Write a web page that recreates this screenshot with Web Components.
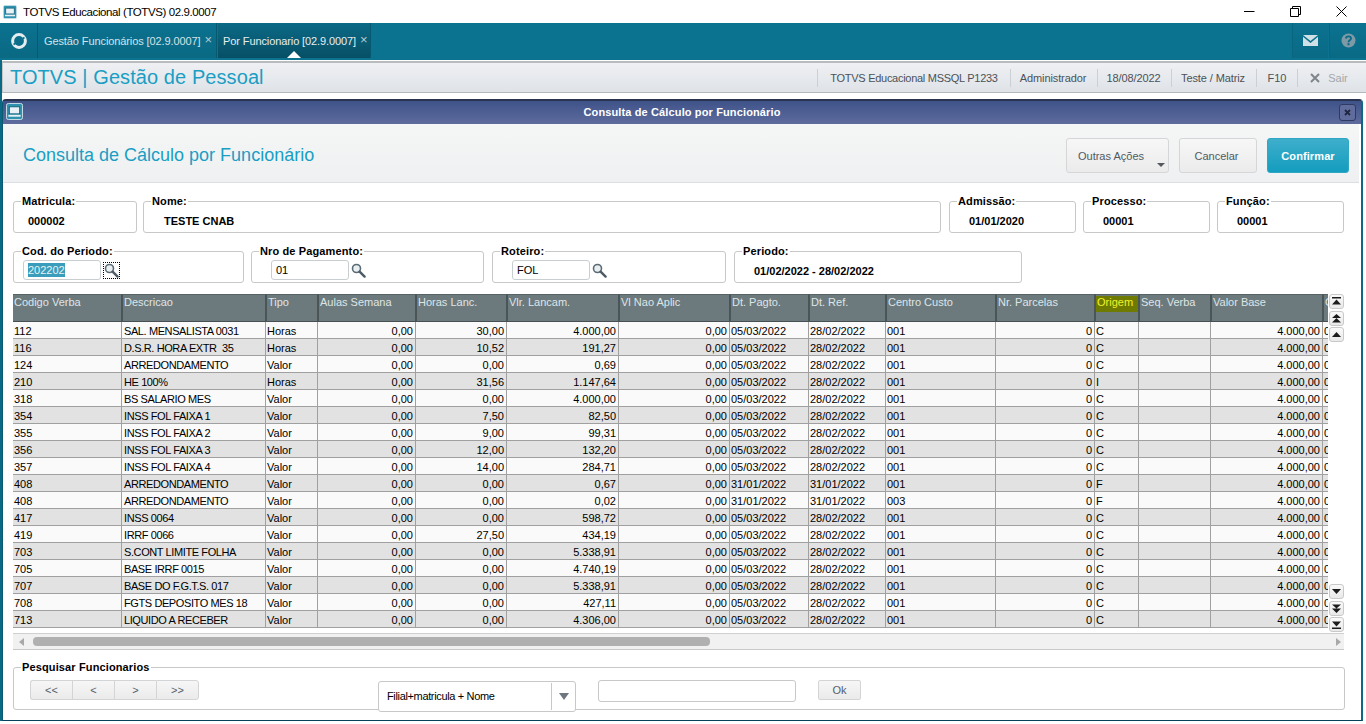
<!DOCTYPE html>
<html lang="pt-BR">
<head>
<meta charset="utf-8">
<title>TOTVS Educacional</title>
<style>
  html, body { margin: 0; padding: 0; background: #fff; }
  body { width: 1366px; height: 724px; overflow: hidden; font-family: "Liberation Sans", Arial, sans-serif; font-size: 11px; color: #000; }
</style>
</head>
<body>
<app-shell>
  <window-bar title-text="TOTVS Educacional (TOTVS) 02.9.0007"></window-bar>
  <tab-strip></tab-strip>
  <module-header></module-header>
  <dialog-window dialog-title="Consulta de Cálculo por Funcionário">
    <dialog-head heading="Consulta de Cálculo por Funcionário"></dialog-head>
    <field-row style="padding-top:18px">
      <group-box label="Matricula:" style="width:124px"><field-value indent="14">000002</field-value></group-box>
      <group-box label="Nome:" style="width:798px;margin-left:6px"><field-value indent="20">TESTE CNAB</field-value></group-box>
      <group-box label="Admissão:" style="width:127px;margin-left:8px"><field-value indent="19">01/01/2020</field-value></group-box>
      <group-box label="Processo:" style="width:127px;margin-left:7px"><field-value indent="19">00001</field-value></group-box>
      <group-box label="Função:" style="width:127px;margin-left:7px"><field-value indent="19">00001</field-value></group-box>
    </field-row>
    <field-row style="padding-top:18px">
      <group-box label="Cod. do Periodo:" style="width:231px"><lookup-input indent="9" selected focused>202202</lookup-input></group-box>
      <group-box label="Nro de Pagamento:" style="width:233px;margin-left:7px"><lookup-input indent="19">01</lookup-input></group-box>
      <group-box label="Roteiro:" style="width:234px;margin-left:8px"><lookup-input indent="19">FOL</lookup-input></group-box>
      <group-box label="Periodo:" style="width:288px;margin-left:8px"><field-value indent="19">01/02/2022 - 28/02/2022</field-value></group-box>
    </field-row>
    <data-grid></data-grid>
    <search-panel></search-panel>
  </dialog-window>
</app-shell>

<script>
const FONT = '"Liberation Sans", Arial, sans-serif';

const MONITOR_ICON = (size) => `
  <svg width="${size}" height="${size}" viewBox="0 0 18 18" aria-hidden="true">
    <rect x=".5" y=".5" width="17" height="17" rx="2" fill="#2f93b0" stroke="#cfe3ea"/>
    <rect x="3.5" y="4" width="11" height="7.5" fill="#e8f2f6" stroke="#12607a"/>
    <path d="M2.5 13.5h13" stroke="#e8f2f6" stroke-width="2"/>
  </svg>`;

const LENS_ICON = `
  <svg width="15" height="15" viewBox="0 0 15 15" aria-hidden="true">
    <circle cx="5.5" cy="5.5" r="4" fill="#e9eef1" stroke="#5b6b75" stroke-width="1.6"/>
    <path d="M8.6 8.6l5 5" stroke="#4d5c66" stroke-width="2.4" stroke-linecap="round"/>
  </svg>`;

// a small base class, every element only has to give its html
class ShadowElement extends HTMLElement {
  constructor() {
    super();
    this.attachShadow({mode: 'open'});
  }
  connectedCallback() {
    this.shadowRoot.innerHTML = this.render();
  }
}

class AppShell extends ShadowElement {
  render() {
    return `<style>:host { display: flex; flex-direction: column; width: 1366px; height: 724px;
      background: linear-gradient(#0a6a86, #0a6a86) 0 23px / 2px 698px no-repeat; }</style><slot></slot>`;
  }
}

class WindowBar extends ShadowElement {
  render() {
    return `
      <style>
        :host { display: flex; align-items: center; height: 23px; background: #fff; flex: none; padding-right: 2px; box-sizing: border-box; }
        .icon { margin: 0 6px 0 3px; display: flex; }
        .title { font: 11.5px ${FONT}; color: #000; flex: 1; letter-spacing: -.4px; }
        .ctl { width: 46px; display: flex; justify-content: center; }
      </style>
      <span class="icon">${MONITOR_ICON(14)}</span>
      <span class="title">${this.getAttribute('title-text')}</span>
      <span class="ctl"><svg width="11" height="11"><path d="M0 5.5h10.5" stroke="#000"/></svg></span>
      <span class="ctl"><svg width="11" height="11" fill="none" stroke="#000"><path d="M.5 2.5h8v8h-8zM2.5 2.5v-2h8v8h-2"/></svg></span>
      <span class="ctl"><svg width="11" height="11" stroke="#000" fill="none"><path d="M.5.5l10 10M10.5.5l-10 10"/></svg></span>`;
  }
}

class TabStrip extends ShadowElement {
  render() {
    return `
      <style>
        :host { display: flex; height: 37px; background: #0b7290; flex: none; font: 11px ${FONT}; color: #d4e3e8; box-sizing: border-box; padding-bottom: 2px; }
        .cell { display: flex; align-items: center; justify-content: center; height: 100%; background: linear-gradient(#0b7290, #0a6983); border-right: 1px solid #07596f; box-sizing: border-box; }
        .home { width: 38px; }
        .tab { padding-left: 6px; width: 179px; justify-content: flex-start; white-space: nowrap; position: relative; letter-spacing: -.1px; }
        .tab .x { margin-left: 4px; color: #b5ccd4; font-size: 13px; position: relative; top: -1px; }
        .tab.active { width: 153px; margin-left: 1px; padding-left: 5px; background: linear-gradient(#0b6a86, #074f65); color: #e6eef1; }
        .tab.active::after { content: ""; position: absolute; left: 69px; bottom: 0; border: 7px solid transparent; border-top: 0; border-bottom-color: #fff; }
        .space { flex: 1; }
        .side { width: 36px; border-left: 1px solid #0a6580; background: linear-gradient(#0b7290, #0a6a85); margin-left: 1px; border-right: 0; }
      </style>
      <div class="cell home">
        <svg width="18" height="18" viewBox="0 0 18 18" aria-hidden="true">
          <circle cx="9" cy="9" r="6.4" fill="none" stroke="#e4eef1" stroke-width="3"/>
          <path d="M3.5 12.5L14.5 5.5" stroke="#0b6f8c" stroke-width="1.5"/>
        </svg>
      </div>
      <div class="cell tab">Gestão Funcionários [02.9.0007]<span class="x">×</span></div>
      <div class="cell tab active">Por Funcionario [02.9.0007]<span class="x">×</span></div>
      <div class="space"></div>
      <div class="cell side">
        <svg width="15" height="11" viewBox="0 0 15 11" aria-hidden="true">
          <path d="M0 0h15L7.5 6z" fill="#cfe0e6"/><path d="M0 1.8V11h15V1.8L7.5 8z" fill="#cfe0e6"/>
        </svg>
      </div>
      <div class="cell side" style="margin-right:0;width:37px">
        <svg width="15" height="15" viewBox="0 0 15 15" aria-hidden="true">
          <circle cx="7.5" cy="7.5" r="7" fill="#7d9aa6"/>
          <path d="M5 5.6C5 2.6 10 2.7 10 5.5 10 7.4 7.5 7.2 7.5 9.2" fill="none" stroke="#0b6a85" stroke-width="1.9"/>
          <rect x="6.5" y="10.2" width="2" height="2" fill="#0b6a85"/>
        </svg>
      </div>`;
  }
}

class ModuleHeader extends ShadowElement {
  render() {
    const items = [
      ['TOTVS Educacional MSSQL P1233', 193, -.28, 0],
      ['Administrador', 87, -.1, 2],
      ['18/08/2022', 74, -.1, 2],
      ['Teste / Matriz', 85, -.1, 2],
      ['F10', 41, 0, 0]
    ];
    return `
      <style>
        :host { display: flex; align-items: center; flex: none; height: 32px; margin: 1px 0 6px 2px; box-sizing: border-box;
          border-top: 2px solid #b9bcbf; border-bottom: 1px solid #b5b8bb; border-left: 1px solid #c4c6c8; background: linear-gradient(#eef0f3, #dfe3e8); }
        h1 { margin: 0 0 0 7px; font: 400 20px ${FONT}; color: #1a9ec3; flex: 1; letter-spacing: .08px; }
        .item { box-sizing: border-box; border-left: 1px solid #ccd0d4; height: 18px; display: flex; align-items: center; justify-content: center; font: 11px ${FONT}; color: #4c5257; }
        .exit { width: 69px; gap: 8px; color: #a3a7ab; padding-right: 6px; }
      </style>
      <h1>TOTVS | Gestão de Pessoal</h1>
      ${items.map(([text, w, ls, pr]) => `<div class="item" style="width:${w}px;letter-spacing:${ls}px;padding-right:${pr}px">${text}</div>`).join('')}
      <div class="item exit">
        <svg width="10" height="10" aria-hidden="true"><path d="M1 1l8 8M9 1l-8 8" stroke="#7e858b" stroke-width="2"/></svg>
        Sair
      </div>`;
  }
}

class DialogWindow extends ShadowElement {
  render() {
    return `
      <style>
        :host { display: block; flex: none; height: 622px; width: 1361px; box-sizing: border-box; background: #fff;
          border-left: 1px solid #0a5a72; border-right: 2px solid #0a6a86; border-bottom: 1px solid #07405a; margin-left: 2px;
          border-top: 2px solid #2a3350; border-radius: 4px 4px 0 0; position: relative; }
        .bar { height: 23px; box-sizing: border-box; padding-bottom: 2px; display: flex; align-items: center; justify-content: center; background: linear-gradient(#3f5389, #5e6b9d); color: #fff; font: 700 11px ${FONT}; letter-spacing: .13px; }
        .icon { position: absolute; left: 3px; top: 2px; display: flex; }
        .close { position: absolute; right: 5px; top: 3px; width: 15px; height: 15px; border: 1px solid #2f3a63; border-radius: 3px; background: #5f6c9c; display: flex; align-items: center; justify-content: center; }
      </style>
      <div class="bar"><span>${this.getAttribute('dialog-title')}</span></div>
      <span class="icon">${MONITOR_ICON(17)}</span>
      <span class="close"><svg width="7" height="7" aria-hidden="true"><path d="M1 1l5 5M6 1l-5 5" stroke="#20263f" stroke-width="1.8"/></svg></span>
      <slot></slot>`;
  }
}

class DialogHead extends ShadowElement {
  render() {
    return `
      <style>
        :host { display: flex; align-items: center; height: 59px; box-sizing: border-box; border-bottom: 1px solid #dcdfe0; margin-right: 2px;
          background: linear-gradient(#f5f6f6, #eef0f1); padding: 5px 10px 0 20px; }
        h2 { flex: 1; margin: 0; font: 400 18px ${FONT}; color: #1a9ec3; }
        button { height: 35px; box-sizing: border-box; margin-left: 10px; border: 1px solid #d4d6d8; border-radius: 3px; background: linear-gradient(#f7f7f7, #ebebeb); font: 11px ${FONT}; color: #4f5a63; }
        .more { width: 103px; padding: 0 13px 0 0; position: relative; }
        .more::after { content: ""; position: absolute; right: 3px; bottom: 5px; border: 4.5px solid transparent; border-bottom: 0; border-top-color: #55595f; }
        .cancel { width: 78px; padding: 0 3px 0 0; }
        .ok { width: 82px; border-color: #2ea6c4; background: linear-gradient(#3eaecb, #149dbf); color: #fff; font-weight: 700; letter-spacing: .1px; }
      </style>
      <h2>${this.getAttribute('heading')}</h2>
      <button class="more">Outras Ações</button>
      <button class="cancel">Cancelar</button>
      <button class="ok">Confirmar</button>`;
  }
}

class FieldRow extends ShadowElement {
  render() {
    return `<style>:host { display: flex; padding-left: 10px; }</style><slot></slot>`;
  }
}

class GroupBox extends ShadowElement {
  render() {
    return `
      <style>
        :host { display: flex; align-items: center; height: 32px; box-sizing: border-box; border: 1px solid #c8c8c8; border-radius: 3px; position: relative; flex: none; }
        .legend { position: absolute; left: 7px; top: -8px; padding: 0 1px; background: #fff; font: 700 11px ${FONT}; letter-spacing: .13px; line-height: 14px; white-space: nowrap; }
      </style>
      <span class="legend">${this.getAttribute('label')}</span>
      <slot></slot>`;
  }
}

class FieldValue extends ShadowElement {
  render() {
    return `
      <style>
        :host { display: block; font: 700 11px ${FONT}; padding-left: ${this.getAttribute('indent')}px; padding-top: 8px; }
      </style>
      <slot></slot>`;
  }
}

class LookupInput extends ShadowElement {
  render() {
    const selected = this.hasAttribute('selected');
    const focused = this.hasAttribute('focused');
    return `
      <style>
        :host { display: flex; align-items: center; padding-left: ${this.getAttribute('indent')}px; padding-top: 6px; }
        .box { width: 78px; height: 20px; box-sizing: border-box; border: 1px solid #c9ced1; border-radius: 3px; background: #fff; display: flex; align-items: center; padding-left: 4px; font: 11px ${FONT}; }
        .sel { background: #3a9dbb; color: #e8f3f6; padding: 1px 0; }
        .lens { margin-left: 2px; display: flex; }
        .focus { outline: 1px dotted #000; margin-left: 3px; }
      </style>
      <span class="box"><span class="${selected ? 'sel' : ''}"><slot></slot></span></span>
      <span class="lens ${focused ? 'focus' : ''}">${LENS_ICON}</span>`;
  }
}

const COLS = [
  ['Codigo Verba', 109], ['Descricao', 144], ['Tipo', 52], ['Aulas Semana', 98], ['Horas Lanc.', 91],
  ['Vlr. Lancam.', 112], ['Vl Nao Aplic', 111], ['Dt. Pagto.', 79], ['Dt. Ref.', 77], ['Centro Custo', 110],
  ['Nr. Parcelas', 99], ['Origem', 44], ['Seq. Verba', 72], ['Valor Base', 112], ['C', 5]
];
// which columns are right aligned
const RIGHT = [3, 4, 5, 6, 10, 13];

// codigo, descricao, tipo, horas, valor, pagto, ref, centro, origem
const ROWS = [
  ['112', 'SAL. MENSALISTA 0031', 'Horas', '30,00', '4.000,00', '05/03/2022', '28/02/2022', '001', 'C'],
  ['116', 'D.S.R. HORA EXTR  35', 'Horas', '10,52', '191,27', '05/03/2022', '28/02/2022', '001', 'C'],
  ['124', 'ARREDONDAMENTO', 'Valor', '0,00', '0,69', '05/03/2022', '28/02/2022', '001', 'C'],
  ['210', 'HE 100%', 'Horas', '31,56', '1.147,64', '05/03/2022', '28/02/2022', '001', 'I'],
  ['318', 'BS SALARIO MES', 'Valor', '0,00', '4.000,00', '05/03/2022', '28/02/2022', '001', 'C'],
  ['354', 'INSS FOL FAIXA 1', 'Valor', '7,50', '82,50', '05/03/2022', '28/02/2022', '001', 'C'],
  ['355', 'INSS FOL FAIXA 2', 'Valor', '9,00', '99,31', '05/03/2022', '28/02/2022', '001', 'C'],
  ['356', 'INSS FOL FAIXA 3', 'Valor', '12,00', '132,20', '05/03/2022', '28/02/2022', '001', 'C'],
  ['357', 'INSS FOL FAIXA 4', 'Valor', '14,00', '284,71', '05/03/2022', '28/02/2022', '001', 'C'],
  ['408', 'ARREDONDAMENTO', 'Valor', '0,00', '0,67', '31/01/2022', '31/01/2022', '001', 'F'],
  ['408', 'ARREDONDAMENTO', 'Valor', '0,00', '0,02', '31/01/2022', '31/01/2022', '003', 'F'],
  ['417', 'INSS 0064', 'Valor', '0,00', '598,72', '05/03/2022', '28/02/2022', '001', 'C'],
  ['419', 'IRRF 0066', 'Valor', '27,50', '434,19', '05/03/2022', '28/02/2022', '001', 'C'],
  ['703', 'S.CONT LIMITE FOLHA', 'Valor', '0,00', '5.338,91', '05/03/2022', '28/02/2022', '001', 'C'],
  ['705', 'BASE IRRF 0015', 'Valor', '0,00', '4.740,19', '05/03/2022', '28/02/2022', '001', 'C'],
  ['707', 'BASE DO F.G.T.S. 017', 'Valor', '0,00', '5.338,91', '05/03/2022', '28/02/2022', '001', 'C'],
  ['708', 'FGTS DEPOSITO MES 18', 'Valor', '0,00', '427,11', '05/03/2022', '28/02/2022', '001', 'C'],
  ['713', 'LIQUIDO A RECEBER', 'Valor', '0,00', '4.306,00', '05/03/2022', '28/02/2022', '001', 'C']
];

class DataGrid extends ShadowElement {
  scrollBtn(path) {
    return `<span class="sb"><svg width="9" height="9" viewBox="0 0 9 9" aria-hidden="true"><path d="${path}" fill="#1c1c1c"/></svg></span>`;
  }
  render() {
    const head = COLS.map(([t], i) => `<th class="${t === 'Origem' ? 'origem' : ''}"><span>${t}</span></th>`).join('');
    const body = ROWS.map(r => {
      const cells = [r[0], r[1], r[2], '0,00', r[3], r[4], '0,00', r[5], r[6], r[7], '0', r[8], '', '4.000,00', '0'];
      return `<tr>${cells.map((c, i) => `<td class="${RIGHT.includes(i) ? 'r' : ''}${i === 1 ? ' desc' : ''}">${c}</td>`).join('')}</tr>`;
    }).join('');
    return `
      <style>
        :host { display: block; margin: 11px 0 0 10px; width: 1331px; }
        .top { display: flex; height: 339px; align-items: flex-start; }
        table { border-collapse: separate; border-spacing: 0; table-layout: fixed; width: 1315px; font: 11px ${FONT}; flex: none; }
        th { height: 28px; box-sizing: border-box; background: #6c7a7e; border-right: 1px solid #4a5558; border-left: 1px solid #4a5558; border-top: 1px solid #566266; border-bottom: 1px solid #465053;
          color: #dfe5e6; font-weight: 400; text-align: left; vertical-align: top; padding: 1px 0 0 1px; white-space: nowrap; overflow: hidden; }
        th:first-child { border-left: 0; }
        th.origem { padding: 1px 0 0 0; }
        th.origem span { display: block; height: 16px; background: #6f7a00; color: #f2f22a; padding-left: 1px; }
        td { height: 17px; box-sizing: border-box; padding: 2px 1px 0; border-right: 1px solid #a0a0a0; border-bottom: 1px solid #a0a0a0; white-space: pre; overflow: hidden; background: #fafafa; line-height: 14px; }
        td.r { text-align: right; padding-right: 2px; }
        td.desc { padding-left: 2px; letter-spacing: -.4px; }
        tr:nth-child(even) td { background: #e2e2e2; }
        td:last-child, th:last-child { border-right: 0; }
        .vbar { width: 16px; height: 339px; display: flex; flex-direction: column; justify-content: space-between; padding-left: 1px; box-sizing: border-box; }
        .group { display: flex; flex-direction: column; gap: 1.5px; }
        .sb { width: 15px; height: 15px; box-sizing: border-box; border: 1px solid #c9c9c9; border-radius: 3px; background: linear-gradient(#fafafa, #e9e9e9); display: flex; align-items: center; justify-content: center; }
        .hbar { height: 17px; box-sizing: border-box; border-top: 1px solid #d0d0d0; border-bottom: 1px solid #c8c8c8; background: #f1f1f1; display: flex; align-items: center; padding: 0 3px 0 6px; }
        .arrow-l { border: 4px solid transparent; border-left: 0; border-right: 5px solid #a8a8a8; margin-right: 9px; }
        .thumb { width: 677px; height: 9px; border-radius: 4px; background: #b0b0b0; }
        .gap { flex: 1; }
        .arrow-r { border: 4px solid transparent; border-right: 0; border-left: 5px solid #a8a8a8; }
      </style>
      <div class="top">
        <table>
          <colgroup>${COLS.map(([, w]) => `<col style="width:${w}px">`).join('')}</colgroup>
          <thead><tr>${head}</tr></thead>
          <tbody>${body}</tbody>
        </table>
        <div class="vbar">
          <div class="group">
            ${this.scrollBtn('M0 0h9v1.5H0zM4.5 2.5L9 7.5H0z')}
            ${this.scrollBtn('M4.5 0L9 4H0zM4.5 4L9 8.5H0z')}
            ${this.scrollBtn('M4.5 2L9 7H0z')}
          </div>
          <div class="group" style="margin-bottom:1px">
            ${this.scrollBtn('M0 2h9L4.5 7z')}
            ${this.scrollBtn('M0 .5h9L4.5 4.5zM0 4.5h9L4.5 9z')}
            ${this.scrollBtn('M0 1.5h9L4.5 6.5zM0 7.5h9V9H0z')}
          </div>
        </div>
      </div>
      <div class="hbar">
        <span class="arrow-l"></span><span class="thumb"></span><span class="gap"></span><span class="arrow-r"></span>
      </div>`;
  }
}

class SearchPanel extends ShadowElement {
  render() {
    return `
      <style>
        :host { display: flex; height: 43px; width: 1332px; margin: 17px 0 0 10px; box-sizing: border-box; border: 1px solid #c8c8c8; border-radius: 3px; position: relative; padding: 12px 0 0 16px; font: 11px ${FONT}; align-items: flex-start; }
        .legend { position: absolute; left: 7px; top: -8px; padding: 0 1px; background: #fff; font-weight: 700; letter-spacing: .13px; line-height: 14px; white-space: nowrap; }
        .nav { display: flex; }
        .nav span { width: 42px; height: 20px; box-sizing: border-box; border: 1px solid #d2d4d6; border-right-width: 0; background: linear-gradient(#f6f6f6, #ebebeb); display: flex; align-items: center; justify-content: center; color: #55606a; }
        .nav span:first-child { border-radius: 3px 0 0 3px; }
        .nav span:last-child { border-right-width: 1px; border-radius: 0 3px 3px 0; width: 43px; }
        .combo { margin-left: 179px; width: 198px; height: 31px; margin-top: 1px; box-sizing: border-box; border: 1px solid #c8c8c8; border-radius: 3px; background: #fff; display: flex; align-items: center; padding-left: 8px; }
        .combo .txt { flex: 1; letter-spacing: -.35px; position: relative; top: -1px; }
        .combo .drop { width: 23px; height: 27px; border-left: 1px solid #c8c8c8; display: flex; align-items: center; justify-content: center; }
        .combo .drop i { border: 5px solid transparent; border-bottom: 0; border-top: 7px solid #6e7780; }
        .input { margin-left: 22px; width: 198px; height: 22px; box-sizing: border-box; border: 1px solid #c8c8c8; border-radius: 3px; background: #fff; }
        .ok { margin-left: 22px; width: 43px; height: 20px; box-sizing: border-box; border: 1px solid #d2d4d6; border-radius: 2px; background: linear-gradient(#f6f6f6, #ebebeb); display: flex; align-items: center; justify-content: center; color: #55606a; }
      </style>
      <span class="legend">Pesquisar Funcionarios</span>
      <div class="nav"><span>&lt;&lt;</span><span>&lt;</span><span>&gt;</span><span>&gt;&gt;</span></div>
      <div class="combo"><span class="txt">Filial+matricula + Nome</span><span class="drop"><i></i></span></div>
      <div class="input"></div>
      <div class="ok">Ok</div>`;
  }
}

customElements.define('app-shell', AppShell);
customElements.define('window-bar', WindowBar);
customElements.define('tab-strip', TabStrip);
customElements.define('module-header', ModuleHeader);
customElements.define('dialog-window', DialogWindow);
customElements.define('dialog-head', DialogHead);
customElements.define('field-row', FieldRow);
customElements.define('group-box', GroupBox);
customElements.define('field-value', FieldValue);
customElements.define('lookup-input', LookupInput);
customElements.define('data-grid', DataGrid);
customElements.define('search-panel', SearchPanel);
</script>
</body>
</html>
